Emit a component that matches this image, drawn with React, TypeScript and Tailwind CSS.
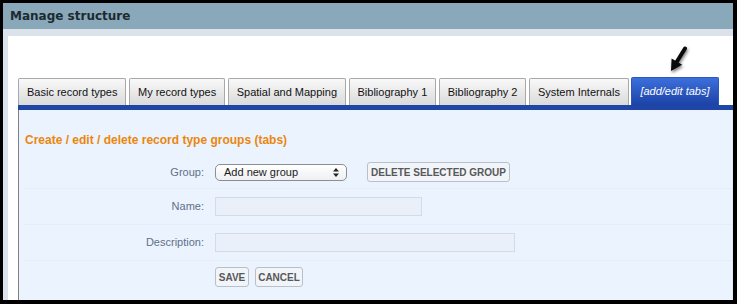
import React from "react";

const tabs = [
  "Basic record types",
  "My record types",
  "Spatial and Mapping",
  "Bibliography 1",
  "Bibliography 2",
  "System Internals",
];

function Arrow() {
  return (
    <svg
      width="24"
      height="30"
      viewBox="0 0 24 30"
      className="absolute left-[660px] top-[10px] drop-shadow-[1px_2px_1.5px_rgba(0,0,0,0.5)]"
    >
      <line x1="17" y1="2.5" x2="9" y2="15.5" stroke="#0a0a0a" strokeWidth="4" strokeLinecap="round" />
      <polygon points="3,25 14.2,18.8 3.6,12.5" fill="#0a0a0a" />
    </svg>
  );
}

export default function App() {
  return (
    <div
      className="w-[737px] h-[304px] bg-black pt-[3px] pl-[3px] pr-[4px] pb-[4px] flex flex-col overflow-hidden"
      style={{ fontFamily: '"Liberation Sans", Arial, sans-serif' }}
    >
      <div className="h-[26px] shrink-0 bg-[#89a8b9] flex items-center pl-[7px]">
        <span
          className="text-[12px] font-bold text-[#1d2a31] leading-none"
          style={{ fontFamily: '"DejaVu Sans", Verdana, sans-serif' }}
        >
          Manage structure
        </span>
      </div>
      <div className="h-[7px] shrink-0 bg-[#dce2e9]" />
      <div className="flex-1 flex min-h-0">
        <div className="w-[5px] shrink-0 bg-[#dce2e9]" />
        <div className="relative flex-1 bg-white pl-[10px] pt-[42px] flex flex-col min-h-0">
          <Arrow />
          <div className="flex gap-[2.5px] items-end h-[27px] shrink-0">
            {tabs.map((t) => (
              <div
                key={t}
                className="h-[27px] px-2 flex items-center border border-b-0 border-[#a8a8a8] rounded-t-[2px] bg-gradient-to-b from-[#f9f9f9] to-[#dadada] text-[11px] text-[#111] whitespace-nowrap"
              >
                {t}
              </div>
            ))}
            <div className="h-[28px] px-2 flex items-center border border-b-0 border-[#2b55c0] rounded-t-[2px] bg-gradient-to-b from-[#3d6fdc] to-[#1c43a6] text-[11px] italic text-white whitespace-nowrap">
              [add/edit tabs]
            </div>
          </div>
          <div className="h-[5px] shrink-0 bg-[#1f45a7]" />
          <div className="flex-1 bg-[#ebf3fe] border-l border-[#7f7f7f] border-r border-r-[#dfe8f4] pt-[23px] pl-[6px] min-h-0">
            <div className="text-[12px] leading-[14px] font-bold text-[#ec860c] mb-[9px]">
              Create / edit / delete record type groups (tabs)
            </div>
            <div className="h-[33px] border-b border-[#e4ecf7] flex items-center">
              <div className="w-[179px] text-right text-[11px] text-[#5f7089]">Group:</div>
              <div className="ml-[11px] w-[132px] h-[17px] rounded-[5px] border border-[#8e8e8e] bg-gradient-to-b from-white to-[#eef0f3] flex items-center justify-between pl-[8px] pr-[7px]">
                <span className="text-[11px] text-[#1a1a1a] leading-none">Add new group</span>
                <svg width="6" height="9" viewBox="0 0 6 9">
                  <polygon points="0,3.6 6,3.6 3,0" fill="#222" />
                  <polygon points="0,5.4 6,5.4 3,9" fill="#222" />
                </svg>
              </div>
              <div className="ml-[20px] w-[143px] h-[20px] rounded-[3px] border border-[#b9c0c8] bg-[#f1f5fa] flex items-center justify-center text-[10px] font-bold text-[#585858]">
                DELETE SELECTED GROUP
              </div>
            </div>
            <div className="h-[36px] border-b border-[#e4ecf7] flex items-center">
              <div className="w-[179px] text-right text-[11px] text-[#5f7089]">Name:</div>
              <div className="ml-[11px] w-[207px] h-[19px] border border-[#d4dbe4] bg-[#e9f0fa]" />
            </div>
            <div className="h-[36px] border-b border-[#e4ecf7] flex items-center">
              <div className="w-[179px] text-right text-[11px] text-[#5f7089]">Description:</div>
              <div className="ml-[11px] w-[300px] h-[19px] border border-[#d4dbe4] bg-[#e9f0fa]" />
            </div>
            <div className="pt-[6px] flex pl-[190px] gap-[6px]">
              <div className="w-[34px] h-[20px] rounded-[3px] border border-[#b9c0c8] bg-[#f1f5fa] flex items-center justify-center text-[10px] font-bold text-[#585858]">
                SAVE
              </div>
              <div className="w-[48px] h-[20px] rounded-[3px] border border-[#b9c0c8] bg-[#f1f5fa] flex items-center justify-center text-[10px] font-bold text-[#585858]">
                CANCEL
              </div>
            </div>
          </div>
        </div>
      </div>
    </div>
  );
}
